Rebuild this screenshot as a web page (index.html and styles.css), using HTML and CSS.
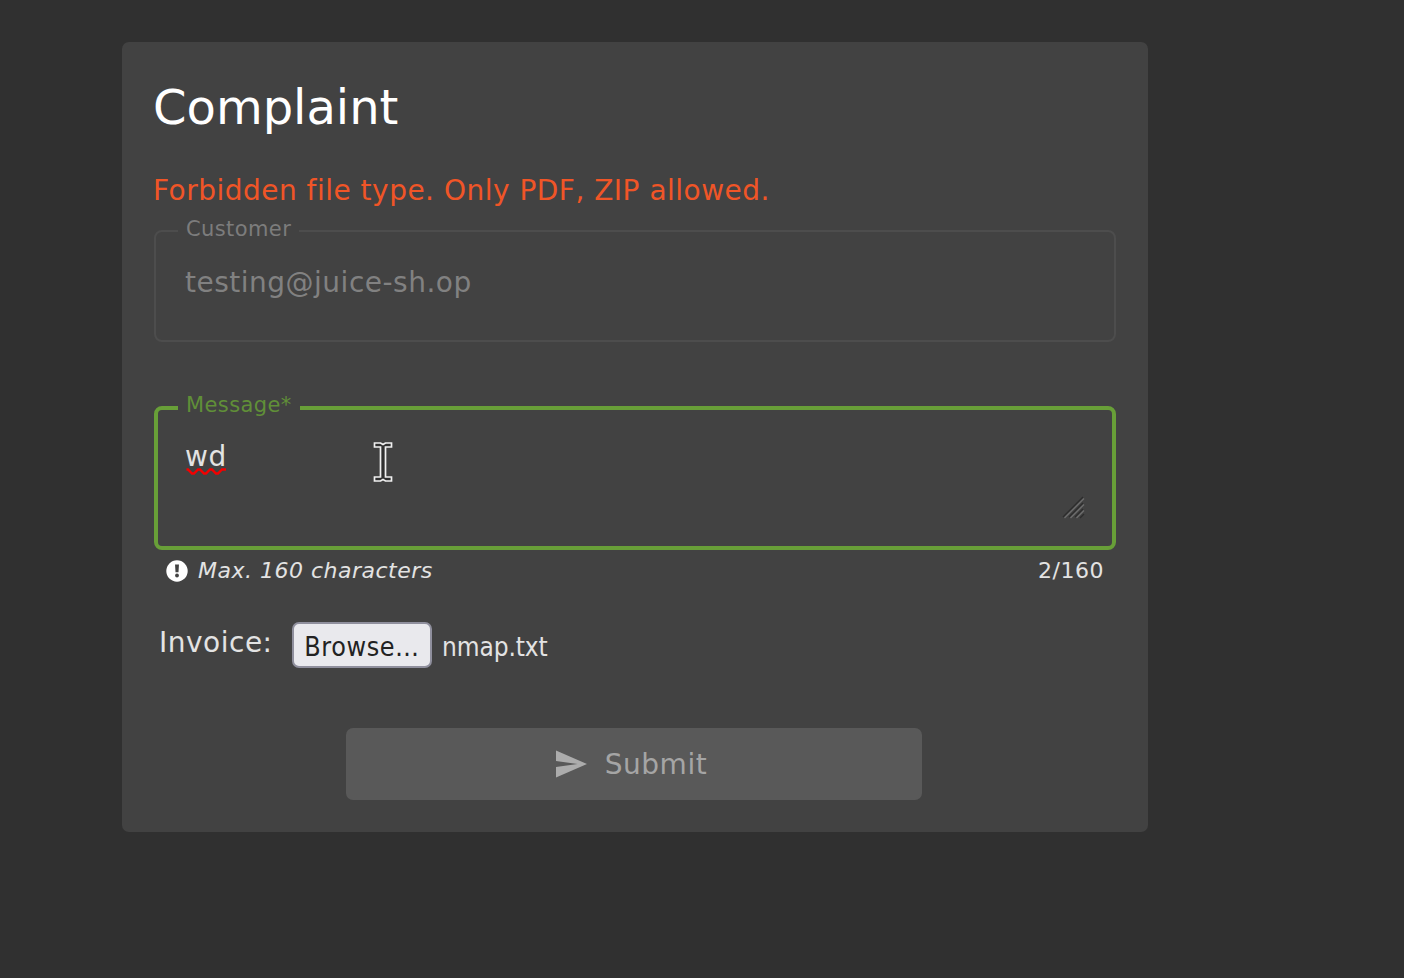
FILE: index.html
```html
<!DOCTYPE html>
<html lang="en">
<head>
<meta charset="utf-8">
<title>Complaint</title>
<link rel="stylesheet" href="styles.css">
</head>
<body>
<main class="card">
  <h1 class="title">Complaint</h1>
  <p class="error">Forbidden file type. Only PDF, ZIP allowed.</p>
  <div class="field field-disabled">
    <span class="label label-customer">Customer</span>
    <span class="value">testing@juice-sh.op</span>
  </div>
  <div class="field field-focused">
    <span class="label label-message">Message*</span>
    <span class="message">wd<svg class="squiggle" width="41" height="8" viewBox="0 0 41 8"><path d="M0.5 1.5L2 1.5L6 5.5H8L12 1.5H14L18 5.5H20L24 1.5H26L30 5.5H32L36 1.5H40" fill="none" stroke="#f40000" stroke-width="2.400"/></svg></span>
    <svg class="grip" width="24" height="24" viewBox="0 0 24 24"><path d="M1 21L21 1M7 21L21 7M13 21L21 13M18 22L22 18" stroke="#2c2c2c" stroke-width="1.3"/><path d="M2.500 22L22 2.500M8.500 22L22 8.500M14.500 22L22 14.500" stroke="#6c6c6c" stroke-width="1.400"/></svg>
    <svg class="cursor" width="22" height="44" viewBox="0 0 22 44"><path d="M2.500 3H8.500L11 4.500L13.500 3H19.500V7H13.500V37H19.500V41H13.500L11 39.500L8.500 41H2.500V37H8.500V7H2.500Z" fill="#303030" stroke="#f0f0f0" stroke-width="1.700"/></svg>
  </div>
  <div class="hints">
    <svg class="info" width="22" height="22" viewBox="0 0 22 22"><circle cx="11" cy="11" r="10.700" fill="#fff"/><path d="M9 4.500H13L12.500 12.300H9.500Z" fill="#424242"/><circle cx="11" cy="15.500" r="1.900" fill="#424242"/></svg>
    <em class="hint">Max. 160 characters</em>
    <span class="count">2/160</span>
  </div>
  <div class="invoice">
    <span class="invoice-label">Invoice:</span>
    <button class="browse">Browse…</button>
    <span class="filename">nmap.txt</span>
  </div>
  <button class="submit" disabled>
    <svg class="send" width="32" height="28" viewBox="0 0 32 28"><path d="M0 0.500L31 14L0 27.500V17L21.500 14L0 11Z" fill="#acacac"/></svg>
    <span class="submit-text">Submit</span>
  </button>
</main>
</body>
</html>
```
FILE: styles.css
```css
* { box-sizing: border-box; }
body {
  margin: 0;
  padding: 42px 0 0 122px;
  background: #303030;
  color: #e3e3e3;
  font-family: "DejaVu Sans", sans-serif;
  font-size: 28px;
}
button { margin: 0; border: 0; font: inherit; }
svg { display: block; flex: none; }
.card {
  display: flex;
  flex-direction: column;
  width: 1026px;
  height: 790px;
  padding: 32px;
  border-radius: 7px;
  background: #424242;
}
.title {
  margin: 0 0 0 -1px;
  color: #fff;
  font-size: 48px;
  font-weight: 400;
  line-height: 66px;
}
.error {
  margin: 35px 0 23px -1px;
  color: #f05527;
  line-height: 32px;
  letter-spacing: .49px;
  white-space: nowrap;
}
.field { position: relative; border-radius: 8px; }
.field-disabled {
  height: 112px;
  padding: 35px 29px;
  border: 2px solid #4d4d4d;
  color: #818181;
}
.field-focused {
  height: 144px;
  margin-top: 64px;
  padding: 31px 27px;
  border: 4px solid #689f38;
}
.value, .message { display: block; line-height: 32px; letter-spacing: .5px; }
.message { position: relative; width: max-content; }
.squiggle { position: absolute; left: 1px; top: 27px; }
.label {
  position: absolute;
  height: 26px;
  padding: 0 8px;
  background: #424242;
  font-size: 21px;
  line-height: 26px;
  letter-spacing: .4px;
}
.label-customer { left: 22px; top: -16px; width: 121px; color: #7c7c7c; }
.label-message { left: 20px; top: -18px; width: 122px; color: #608f38; }
.grip { position: absolute; right: 26px; bottom: 26px; }
.cursor { position: absolute; left: 214px; top: 30px; }
.hints {
  display: flex;
  align-items: center;
  height: 26px;
  margin-top: 8px;
  padding: 0 12px;
  font-size: 22px;
  line-height: 26px;
  letter-spacing: .5px;
}
.hint { margin-left: 10px; }
.count { margin-left: auto; }
.invoice { display: flex; height: 46px; margin-top: 38px; padding-left: 5px; }
.invoice-label { width: 133px; line-height: 42px; letter-spacing: .5px; }
.browse {
  width: 140px;
  height: 46px;
  padding: 2px 0 0;
  border: 2px solid #8f8f9d;
  border-radius: 7px;
  background: #e9e9ed;
  color: #222;
  letter-spacing: .6px;
}
.browse, .filename {
  font-family: "DejaVu Sans Condensed", "DejaVu Sans", sans-serif;
  font-stretch: condensed;
  font-size: 26.67px;
  line-height: 42px;
}
.filename { margin-left: 10px; padding-top: 4px; font-size: 26px; letter-spacing: -.1px; }
.submit {
  display: flex;
  align-items: center;
  justify-content: center;
  width: 576px;
  height: 72px;
  margin: 60px 0 0 192px;
  padding: 0 5px 0 0;
  border-radius: 7px;
  background: #595959;
  color: #a5a5a5;
}
.submit-text { margin-left: 17px; letter-spacing: .5px; }
```
